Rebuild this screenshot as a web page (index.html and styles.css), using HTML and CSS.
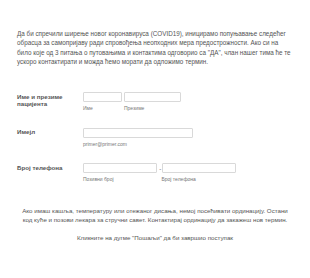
FILE: index.html
```html
<!DOCTYPE html>
<html>
<head>
<meta charset="utf-8">
<link rel="stylesheet" href="styles.css">
</head>
<body>
<div class="page">
  <p class="intro">Да би спречили ширење новог коронавируса (COVID19), иницирамо попуњавање следећег обрасца за самопријаву ради спровођења неопходних мера предострожности. Ако си на било које од 3 питања о путовањима и контактима одговорио са "ДА", члан нашег тима ће те ускоро контактирати и можда ћемо морати да одложимо термин.</p>

  <div class="form">
    <div class="row">
      <div class="label">Име и презиме пацијента</div>
      <div class="fields">
        <div class="field">
          <div class="input w-first"></div>
          <div class="sub">Име</div>
        </div>
        <div class="field">
          <div class="input w-last"></div>
          <div class="sub">Презиме</div>
        </div>
      </div>
    </div>
    <div class="row">
      <div class="label">Имејл</div>
      <div class="fields">
        <div class="field">
          <div class="input w-email"></div>
          <div class="sub">primer@primer.com</div>
        </div>
      </div>
    </div>
    <div class="row">
      <div class="label">Број телефона</div>
      <div class="fields">
        <div class="field">
          <div class="input w-phone"></div>
          <div class="sub">Позивни број</div>
        </div>
        <div class="dash">-</div>
        <div class="field">
          <div class="input w-phone"></div>
          <div class="sub">Број телефона</div>
        </div>
      </div>
    </div>
  </div>

  <p class="note">Ако имаш кашља, температуру или отежаног дисања, немој посећивати ординацију. Остани код куће и позови лекара за стручни савет. Контактирај ординацију да закажеш нов термин.</p>
  <p class="note note-last">Кликните на дугме "Пошаљи" да би завршио поступак</p>
</div>
</body>
</html>
```

FILE: styles.css
```css
html, body {
  margin: 0;
  padding: 0;
  background: #ffffff;
}
.page {
  width: 310px;
  height: 278px;
  box-sizing: border-box;
  padding: 28.5px 17px 0 17px;
  font-family: "Liberation Sans", Arial, sans-serif;
  color: #555555;
}
.intro {
  margin: 0 0.5px 0 0;
  font-size: 6.32px;
  line-height: 9.6px;
}
.form {
  margin-top: 25.5px;
}
.row {
  display: grid;
  grid-template-columns: 66px 1fr;
  height: 35.5px;
}
.label {
  font-weight: bold;
  font-size: 6.2px;
  line-height: 7.5px;
  padding-top: 0.6px;
  width: 58px;
  color: #555555;
}
.fields {
  display: flex;
  align-items: flex-start;
}
.field {
  display: flex;
  flex-direction: column;
}
.field + .field {
  margin-left: 2px;
}
.input {
  height: 10px;
  box-sizing: border-box;
  border: 1px solid #d9d9d9;
  border-radius: 1px;
  background: #ffffff;
}
.w-first { width: 39px; }
.w-last { width: 56.5px; }
.w-email { width: 109.5px; }
.w-phone { width: 74px; }
.sub {
  font-size: 5px;
  line-height: 6px;
  margin-top: 3px;
  color: #777777;
}
.dash {
  width: 6.5px;
  text-align: center;
  font-size: 6.2px;
  line-height: 10px;
  margin-right: -2px;
  padding-top: 1px;
}
.note {
  margin: 7px 0 0 0;
  text-align: center;
  font-size: 6.2px;
  line-height: 9.6px;
}
.note-last {
  margin-top: 7.8px;
}
```
